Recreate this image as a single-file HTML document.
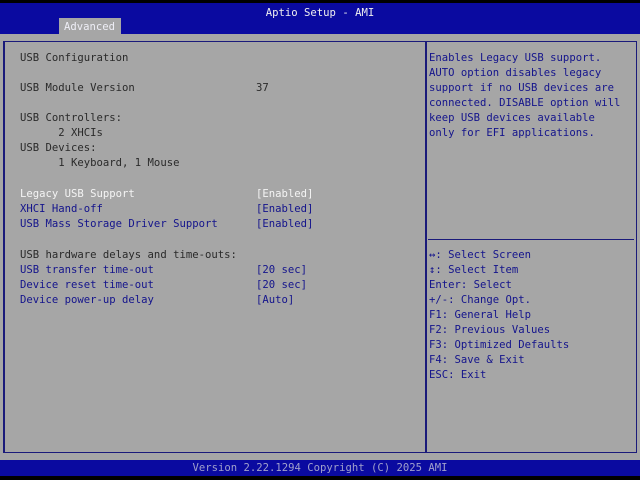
<!DOCTYPE html>
<html><head><meta charset="utf-8"><style>
*{margin:0;padding:0;box-sizing:border-box}
body{width:640px;height:480px;background:#000;position:relative;overflow:hidden;font-family:"DejaVu Sans Mono","Liberation Mono",monospace;font-size:10.6px;}
.abs{position:absolute;white-space:pre;line-height:15px}
#hdr{position:absolute;left:0;top:3px;width:640px;height:31px;background:#0a0aa0}
#main{position:absolute;left:0;top:34px;width:640px;height:426px;background:#a6a6a6}
#ftr{position:absolute;left:0;top:460px;width:640px;height:16px;background:#0a0aa0}
.t{color:#2a2a2a}
.b{color:#14148c}
.w{color:#f4f4f4}
</style></head><body>
<div id="hdr"></div>
<div class="abs" style="left:0;width:640px;top:6px;text-align:center;color:#f0f0f0">Aptio Setup - AMI</div>
<div style="position:absolute;left:59px;top:18px;width:62px;height:16px;background:#a6a6a6"></div>
<div class="abs" style="left:64px;top:20px;color:#eeeef6;line-height:15px">Advanced</div>
<div id="main"></div>
<div style="position:absolute;left:3px;top:41px;width:634px;height:412px;border:1px solid #1a1a7a;border-left-width:2px"></div>
<div style="position:absolute;left:425px;top:41px;width:2px;height:412px;background:#1a1a7a"></div>
<div style="position:absolute;left:428px;top:239px;width:206px;height:1px;background:#1a1a7a"></div>
<div class="abs t" style="left:20px;top:51px">USB Configuration

USB Module Version                   37

USB Controllers:
      2 XHCIs
USB Devices:
      1 Keyboard, 1 Mouse</div>
<div class="abs w" style="left:20px;top:187px">Legacy USB Support                   [Enabled]</div>
<div class="abs b" style="left:20px;top:202px">XHCI Hand-off                        [Enabled]
USB Mass Storage Driver Support      [Enabled]</div>
<div class="abs t" style="left:20px;top:248px">USB hardware delays and time-outs:</div>
<div class="abs b" style="left:20px;top:263px">USB transfer time-out                [20 sec]
Device reset time-out                [20 sec]
Device power-up delay                [Auto]</div>
<div class="abs b" style="left:429px;top:51px">Enables Legacy USB support.
AUTO option disables legacy
support if no USB devices are
connected. DISABLE option will
keep USB devices available
only for EFI applications.</div>
<div class="abs b" style="left:429px;top:248px">↔: Select Screen
↕: Select Item
Enter: Select
+/-: Change Opt.
F1: General Help
F2: Previous Values
F3: Optimized Defaults
F4: Save &amp; Exit
ESC: Exit</div>
<div id="ftr"></div>
<div class="abs" style="left:0;width:640px;top:461px;text-align:center;color:#a0a0cc">Version 2.22.1294 Copyright (C) 2025 AMI</div>
</body></html>
